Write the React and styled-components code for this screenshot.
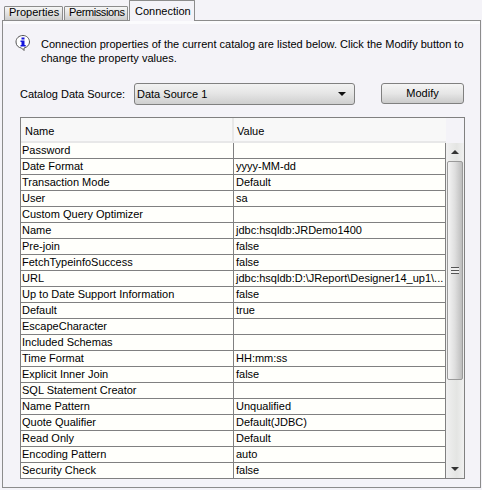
import React from "react";
import styled, { createGlobalStyle } from "styled-components";

const Global = createGlobalStyle`
  html, body { margin: 0; padding: 0; background: #f4f3f8; }
  body { font-family: "Liberation Sans", Arial, sans-serif; font-size: 11px; color: #000; }
`;
const Page = styled.div`
  width: 482px; height: 490px; overflow: hidden; box-sizing: border-box; padding: 0 1px 2px 2px;
  display: flex; flex-direction: column;
`;
const TabBar = styled.div`
  display: flex; align-items: flex-end; height: 21px; padding-left: 2px; gap: 1px; position: relative; z-index: 1; margin-bottom: -1px;
`;
const Tab = styled.div`
  box-sizing: border-box; width: ${p => p.$w}px; height: ${p => (p.$active ? 21 : 15)}px;
  border: 1px solid #8c8c8c; border-bottom: ${p => (p.$active ? "none" : "1px solid #8c8c8c")};
  background: ${p => (p.$active ? "#f4f3f8" : "linear-gradient(#f6f6f6, #e2e2e2 50%, #cdcdcd)")};
  padding: ${p => (p.$active ? "3px 0 0 5px" : "0 0 0 4px")};
  line-height: ${p => (p.$active ? 14 : 11)}px; white-space: nowrap; border-radius: 1px 1px 0 0;
  letter-spacing: ${p => p.$spacing || 0}px;
`;
const Panel = styled.div`
  flex: 1; box-sizing: border-box; border: 1px solid #8c8c8c; padding: 0 15px 0 17px; display: flex; flex-direction: column;
  box-shadow: inset 0 3px 0 #fbfbfd;
`;
const Notice = styled.div`
  display: flex; gap: 10px; height: 62px; padding-top: 16px; box-sizing: border-box; margin-left: -5px;
`;
const NoticeIcon = styled.svg`
  width: 16px; height: 16px; flex: none; margin-top: -2px;
`;
const NoticeText = styled.div`
  line-height: 14px; white-space: pre-line; width: 430px;
`;
const SourceRow = styled.div`
  display: flex; align-items: flex-start; height: 22px;
`;
const SourceLabel = styled.div`
  width: 114px; white-space: nowrap; line-height: 22px;
`;
const Select = styled.div`
  box-sizing: border-box; width: 221px; height: 22px; border: 1px solid #808080; border-radius: 3px;
  background: linear-gradient(#f2f2f2, #e6e6e6 45%, #cfcfcf);
  display: flex; align-items: center; justify-content: space-between; padding: 0 8px 0 2px;
`;
const Arrow = styled.span`
  width: 0; height: 0; border-left: 4px solid transparent; border-right: 4px solid transparent; border-top: 4px solid #111;
`;
const Button = styled.div`
  box-sizing: border-box; width: 83px; height: 21px; margin-left: 26px; border: 1px solid #808080; border-radius: 3px;
  background: linear-gradient(#f5f5f5, #e6e6e6 50%, #cbcbcb); text-align: center; line-height: 19px;
`;
const Table = styled.div`
  box-sizing: border-box; width: 445px; height: 362px; margin-top: 12px; border: 1px solid #808080; display: flex; background: #f4f3f8; overflow: hidden;
`;
const Main = styled.div`
  width: 425px; flex: none; display: flex; flex-direction: column;
`;
const Header = styled.div`
  display: grid; grid-template-columns: 211px 1fr; height: 25px; flex: none; background: #f8f8f8; border-bottom: 2px solid #e8e8e8; box-sizing: border-box;
`;
const HeadCell = styled.div`
  padding: 6px 0 0 4px; line-height: 15px; & + & { border-left: 2px solid #e8e8e8; padding-left: 3px; }
`;
const Row = styled.div`
  display: grid; grid-template-columns: 212px 1fr; height: 16px; flex: none; box-sizing: border-box; background: #fffffb; border-bottom: 1px solid #808080; border-right: 1px solid #808080;
`;
const Cell = styled.div`
  line-height: 15px; padding-left: 1px; white-space: nowrap; overflow: hidden;
  & + & { border-left: 1px solid #808080; padding-left: 2px; }
`;
const Bar = styled.div`
  flex: 1; display: flex; flex-direction: column; align-items: center; background: linear-gradient(90deg,#f0f0f0,#e4e5e3 60%,#f0f0f0); margin-top: 25px;
`;
const BarEnd = styled.div`
  height: 18px; display: flex; align-items: center; justify-content: center; flex: none;
`;
const UpArrow = styled.span`
  width: 0; height: 0; border-left: 4px solid transparent; border-right: 4px solid transparent; border-bottom: 4px solid #333;
`;
const DownArrow = styled.span`
  width: 0; height: 0; border-left: 4px solid transparent; border-right: 4px solid transparent; border-top: 4px solid #333;
`;
const Thumb = styled.div`
  box-sizing: border-box; width: 16px; height: 219px; flex: none; border: 1px solid #9a9a9a; border-radius: 2px;
  background: linear-gradient(90deg,#f4f4f4,#dedede 50%,#bdbdbd); display: flex; align-items: center; justify-content: center;
`;
const Grip = styled.div`
  width: 8px; height: 7px; background: repeating-linear-gradient(#555 0 1px, #eee 1px 3px);
`;
const Spacer = styled.div`
  flex: 1;
`;

const rows = [
  ["Password", ""], ["Date Format", "yyyy-MM-dd"], ["Transaction Mode", "Default"], ["User", "sa"],
  ["Custom Query Optimizer", ""], ["Name", "jdbc:hsqldb:JRDemo1400"], ["Pre-join", "false"],
  ["FetchTypeinfoSuccess", "false"], ["URL", "jdbc:hsqldb:D:\\JReport\\Designer14_up1\\..."],
  ["Up to Date Support Information", "false"], ["Default", "true"], ["EscapeCharacter", ""],
  ["Included Schemas", ""], ["Time Format", "HH:mm:ss"], ["Explicit Inner Join", "false"],
  ["SQL Statement Creator", ""], ["Name Pattern", "Unqualified"], ["Quote Qualifier", "Default(JDBC)"],
  ["Read Only", "Default"], ["Encoding Pattern", "auto"], ["Security Check", "false"],
];

export default function App() {
  return (
    <Page>
      <Global />
      <TabBar>
        <Tab $w={59}>Properties</Tab>
        <Tab $w={64} $spacing={-0.4}>Permissions</Tab>
        <Tab $w={66} $active>Connection</Tab>
      </TabBar>
      <Panel>
        <Notice>
          <NoticeIcon viewBox="0 0 16 16">
            <path d="M8 .5C4 .5 1 3.200 1 7c0 3.400 2.400 5.700 5.500 6l2.500 2.500V13c3-.6 5.500-3 5.500-6 0-3.800-3-6.500-6.500-6.500z" fill="#fff" stroke="#555" />
            <rect x="6.500" y="2.500" width="3" height="2" fill="#1414dc" />
            <path d="M5.500 5.500h4v4.500h1.200v1.500H5.500V10h1V7h-1z" fill="#1414dc" />
          </NoticeIcon>
          <NoticeText>{"Connection properties of the current catalog are listed below. Click the Modify button to\nchange the property values."}</NoticeText>
        </Notice>
        <SourceRow>
          <SourceLabel>Catalog Data Source:</SourceLabel>
          <Select>Data Source 1<Arrow /></Select>
          <Button>Modify</Button>
        </SourceRow>
        <Table>
          <Main>
            <Header><HeadCell>Name</HeadCell><HeadCell>Value</HeadCell></Header>
            {rows.map(([n, v]) => (
              <Row key={n}><Cell>{n}</Cell><Cell>{v}</Cell></Row>
            ))}
          </Main>
          <Bar>
            <BarEnd><UpArrow /></BarEnd>
            <Thumb><Grip /></Thumb>
            <Spacer />
            <BarEnd><DownArrow /></BarEnd>
          </Bar>
        </Table>
      </Panel>
    </Page>
  );
}
